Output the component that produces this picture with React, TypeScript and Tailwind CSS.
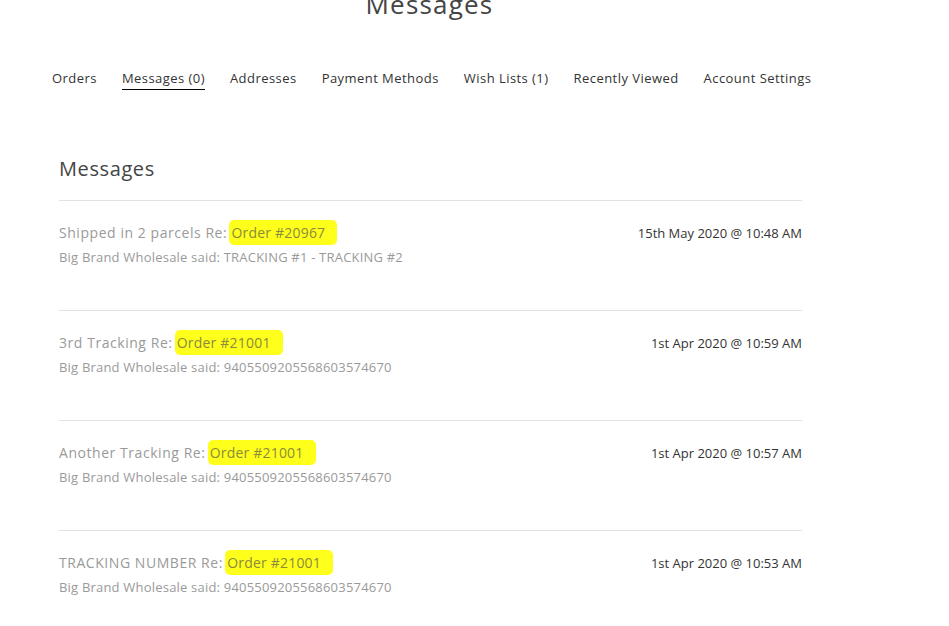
const navItems = [
  'Orders',
  'Messages (0)',
  'Addresses',
  'Payment Methods',
  'Wish Lists (1)',
  'Recently Viewed',
  'Account Settings',
];

const messages = [
  {
    subject: 'Shipped in 2 parcels Re: ',
    order: 'Order #20967',
    body: 'Big Brand Wholesale said: TRACKING #1 - TRACKING #2',
    date: '15th May 2020 @ 10:48 AM',
  },
  {
    subject: '3rd Tracking Re: ',
    order: 'Order #21001',
    body: 'Big Brand Wholesale said: 9405509205568603574670',
    date: '1st Apr 2020 @ 10:59 AM',
  },
  {
    subject: 'Another Tracking Re: ',
    order: 'Order #21001',
    body: 'Big Brand Wholesale said: 9405509205568603574670',
    date: '1st Apr 2020 @ 10:57 AM',
  },
  {
    subject: 'TRACKING NUMBER Re: ',
    order: 'Order #21001',
    body: 'Big Brand Wholesale said: 9405509205568603574670',
    date: '1st Apr 2020 @ 10:53 AM',
  },
];

const App = () => {
  return (
    <div className="w-[949px] h-[626px] overflow-hidden bg-white font-['Open_Sans',sans-serif] text-[#333]">
      <h1 className="-mt-[14px] h-[42px] text-center text-[26px] leading-[36px] tracking-[1.2px] text-[#444] pr-[90px]">
        Messages
      </h1>

      <nav className="mt-[40px] flex gap-[25px] pl-[52px] text-[13px] leading-[20px] tracking-[0.45px]">
        {navItems.map((item) => (
          <span
            key={item}
            className={item === 'Messages (0)' ? 'border-b-[1.5px] border-black pb-[1px]' : 'pb-[2px]'}
          >
            {item}
          </span>
        ))}
      </nav>

      <main className="ml-[59px] w-[743px] mt-[66px]">
        <h2 className="text-[20px] leading-[26px] tracking-[0.6px] text-[#444] pb-[18px] border-b border-[#e2e2e2]">
          Messages
        </h2>

        {messages.map((m, i) => (
          <div
            key={i}
            className="flex justify-between pt-[22px] h-[110px] border-b border-[#e2e2e2]"
          >
            <div className="flex flex-col gap-[4px]">
              <p className="text-[14px] leading-[20px] tracking-[0.55px] text-[#9a9a9a]">
                {m.subject}
                <span className="bg-[#ffff1c] text-[#8a8a3a] tracking-[0.2px] py-[3px] pr-[12px] -ml-[2px] pl-[2px] rounded-[5px]">
                  {m.order}
                </span>
              </p>
              <p className="text-[13px] leading-[20px] tracking-[0.2px] text-[#9a9a9a]">{m.body}</p>
            </div>
            <p className="text-[13px] leading-[20px] text-[#333]">{m.date}</p>
          </div>
        ))}
      </main>
    </div>
  );
};

export default App;
